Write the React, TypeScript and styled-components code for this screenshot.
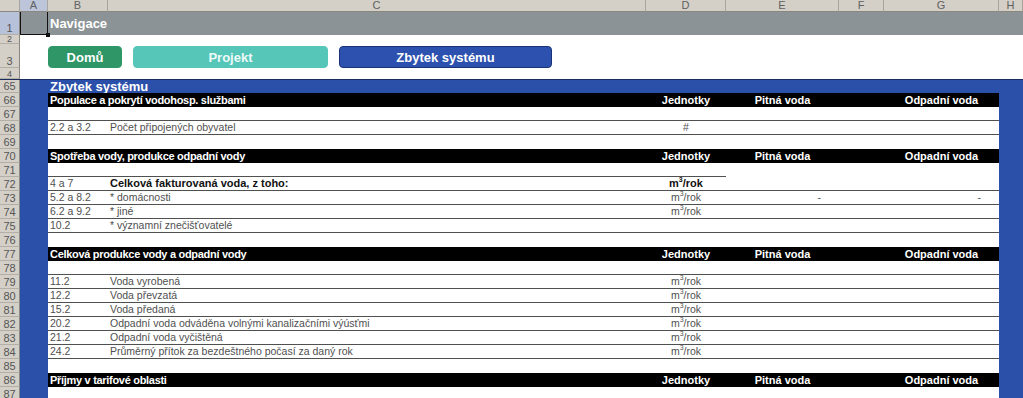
import React from "react"
import styled, { createGlobalStyle } from "styled-components"

const COLS = "20px 28px 60px 538px 80px 113px 45px 115px 1fr"

const GlobalStyle = createGlobalStyle`
  body {
    margin: 0;
    background: #ffffff;
    font-family: "Liberation Sans", Arial, sans-serif;
  }
`

const Sheet = styled.div`
  width: 1023px;
  height: 398px;
  overflow: hidden;
  background: #ffffff;
`

const SheetRow = styled.div<{ h: number; topLine?: boolean }>`
  display: grid;
  grid-template-columns: ${COLS};
  height: ${({ h }) => h}px;
  box-sizing: border-box;
  border-top: ${({ topLine }) => (topLine ? "1px solid #1b2b5c" : "none")};
`

const ColHead = styled.div<{ active?: boolean }>`
  display: flex;
  align-items: center;
  justify-content: center;
  background: ${({ active }) => (active ? "#bcc5da" : "#d4d0c8")};
  border-right: 1px solid #a9a59c;
  border-bottom: 1px solid #8a877f;
  font-size: 11px;
  color: #606060;
  line-height: 11px;
`

const RowHead = styled.div<{ active?: boolean; small?: boolean }>`
  display: flex;
  align-items: flex-end;
  justify-content: center;
  background: ${({ active }) => (active ? "#b7c1d9" : "#d4d0c8")};
  border-right: 1px solid #8a877f;
  border-bottom: 1px solid #b3afa6;
  box-sizing: border-box;
  font-size: ${({ small }) => (small ? 9 : 11)}px;
  line-height: ${({ small }) => (small ? 8 : 10)}px;
  padding-bottom: ${({ small }) => (small ? 0 : 1)}px;
  color: #555555;
  overflow: hidden;
`

const NavBand = styled.div`
  grid-column: 3 / -1;
  display: flex;
  align-items: center;
  padding-left: 2px;
  background: #8b9396;
  color: #ffffff;
  font-weight: bold;
  font-size: 13px;
`

const SelectedCell = styled.div`
  position: relative;
  background: #8b9396;
  border: 1px solid #111111;
  border-top: none;
  &::after {
    content: "";
    position: absolute;
    right: -3px;
    bottom: -3px;
    width: 4px;
    height: 4px;
    background: #111111;
  }
`

const ButtonBar = styled.div`
  grid-column: 3 / -1;
  display: flex;
  align-items: flex-end;
  gap: 11px;
`

const NavButton = styled.div<{ w: number; bg: string; fg?: string; edge?: string }>`
  width: ${({ w }) => w}px;
  height: 22px;
  box-sizing: border-box;
  display: flex;
  align-items: center;
  justify-content: center;
  border-radius: 4px;
  background: ${({ bg }) => bg};
  border: 1px solid ${({ edge, bg }) => edge || bg};
  color: ${({ fg }) => fg || "#ffffff"};
  font-weight: bold;
  font-size: 13px;
`

const Blue = styled.div`
  background: #2b50aa;
`

const SectionTitle = styled.div`
  grid-column: 2 / -1;
  display: flex;
  align-items: center;
  padding-left: 30px;
  background: #2b50aa;
  color: #ffffff;
  font-weight: bold;
  font-size: 13px;
  line-height: 13px;
`

const BandCell = styled.div<{ span?: number; center?: boolean }>`
  grid-column: span ${({ span }) => span || 1};
  display: flex;
  align-items: center;
  justify-content: ${({ center }) => (center ? "center" : "flex-start")};
  padding-left: ${({ center }) => (center ? 0 : 2)}px;
  background: #000000;
  color: #ffffff;
  font-weight: bold;
  font-size: 11px;
  letter-spacing: ${({ center }) => (center ? 0 : -0.3)}px;
  white-space: nowrap;
  overflow: hidden;
`

const Cell = styled.div<{ line?: boolean; bold?: boolean; align?: "left" | "center" | "right" }>`
  display: flex;
  align-items: flex-end;
  justify-content: ${({ align }) => (align === "center" ? "center" : align === "right" ? "flex-end" : "flex-start")};
  padding: 0 ${({ align }) => (align === "right" ? 18 : 0)}px 0 ${({ align }) => (align === "left" || !align ? 2 : 0)}px;
  box-sizing: border-box;
  border-bottom: 1px solid ${({ line }) => (line ? "#505050" : "transparent")};
  background: #ffffff;
  font-size: ${({ bold }) => (bold ? 11 : 10.5)}px;
  line-height: 13px;
  font-weight: ${({ bold }) => (bold ? "bold" : "normal")};
  color: ${({ bold }) => (bold ? "#111111" : "#505050")};
  white-space: nowrap;
`

const Sup = styled.sup`
  font-size: 7px;
  line-height: 0;
  vertical-align: 5px;
`

type Line = "full" | "bd"

interface DataRow {
  n: number
  band?: string
  b?: string
  c?: string
  d?: string
  e?: string
  g?: string
  bold?: boolean
  line?: Line
}

const rows: DataRow[] = [
  { n: 66, band: "Populace a pokrytí vodohosp. službami" },
  { n: 67, line: "full" },
  { n: 68, b: "2.2 a 3.2", c: "Počet připojených obyvatel", d: "#", line: "full" },
  { n: 69 },
  { n: 70, band: "Spotřeba vody, produkce odpadní vody" },
  { n: 71, line: "bd" },
  { n: 72, b: "4 a 7", c: "Celková fakturovaná voda, z toho:", d: "m3", bold: true, line: "full" },
  { n: 73, b: "5.2 a 8.2", c: "* domácnosti", d: "m3", e: "-", g: "-", line: "full" },
  { n: 74, b: "6.2 a 9.2", c: "* jiné", d: "m3", line: "full" },
  { n: 75, b: "10.2", c: "* významní znečišťovatelé", line: "full" },
  { n: 76 },
  { n: 77, band: "Celková produkce vody a odpadní vody" },
  { n: 78, line: "full" },
  { n: 79, b: "11.2", c: "Voda vyrobená", d: "m3", line: "full" },
  { n: 80, b: "12.2", c: "Voda převzatá", d: "m3", line: "full" },
  { n: 81, b: "15.2", c: "Voda předaná", d: "m3", line: "full" },
  { n: 82, b: "20.2", c: "Odpadní voda odváděna volnými kanalizačními výúsťmi", d: "m3", line: "full" },
  { n: 83, b: "21.2", c: "Odpadní voda vyčištěná", d: "m3", line: "full" },
  { n: 84, b: "24.2", c: "Průměrný přítok za bezdeštného počasí za daný rok", d: "m3", line: "full" },
  { n: 85 },
  { n: 86, band: "Příjmy v tarifové oblasti" },
  { n: 87 },
]

function Unit({ value }: { value?: string }) {
  if (value !== "m3") return <>{value}</>
  return (
    <span>
      m<Sup>3</Sup>/rok
    </span>
  )
}

function renderRow(row: DataRow) {
  if (row.band) {
    return (
      <SheetRow key={row.n} h={14}>
        <RowHead>{row.n}</RowHead>
        <Blue />
        <BandCell span={2}>{row.band}</BandCell>
        <BandCell center>Jednotky</BandCell>
        <BandCell center>Pitná voda</BandCell>
        <BandCell />
        <BandCell center>Odpadní voda</BandCell>
        <Blue />
      </SheetRow>
    )
  }
  const full = row.line === "full"
  const bd = full || row.line === "bd"
  return (
    <SheetRow key={row.n} h={14}>
      <RowHead>{row.n}</RowHead>
      <Blue />
      <Cell line={bd}>{row.b}</Cell>
      <Cell line={bd} bold={row.bold}>
        {row.c}
      </Cell>
      <Cell line={bd} bold={row.bold} align="center">
        <Unit value={row.d} />
      </Cell>
      <Cell line={full} align="right">
        {row.e}
      </Cell>
      <Cell line={full} />
      <Cell line={full} align="right">
        {row.g}
      </Cell>
      <Blue />
    </SheetRow>
  )
}

export default function App() {
  const letters = ["A", "B", "C", "D", "E", "F", "G", "H"]
  return (
    <>
      <GlobalStyle />
      <Sheet>
        <SheetRow h={12}>
          <ColHead />
          {letters.map(l => (
            <ColHead key={l} active={l === "A"}>
              {l}
            </ColHead>
          ))}
        </SheetRow>
        <SheetRow h={23}>
          <RowHead active>1</RowHead>
          <SelectedCell />
          <NavBand>Navigace</NavBand>
        </SheetRow>
        <SheetRow h={9}>
          <RowHead small>2</RowHead>
        </SheetRow>
        <SheetRow h={24}>
          <RowHead>3</RowHead>
          <div />
          <ButtonBar>
            <NavButton w={74} bg="#2f9667">
              Domů
            </NavButton>
            <NavButton w={195} bg="#56c6b9" fg="#eefaf8">
              Projekt
            </NavButton>
            <NavButton w={213} bg="#2d51ae" edge="#1c3277">
              Zbytek systému
            </NavButton>
          </ButtonBar>
        </SheetRow>
        <SheetRow h={11}>
          <RowHead small>4</RowHead>
        </SheetRow>
        <SheetRow h={14} topLine>
          <RowHead>65</RowHead>
          <SectionTitle>Zbytek systému</SectionTitle>
        </SheetRow>
        {rows.map(renderRow)}
      </Sheet>
    </>
  )
}
